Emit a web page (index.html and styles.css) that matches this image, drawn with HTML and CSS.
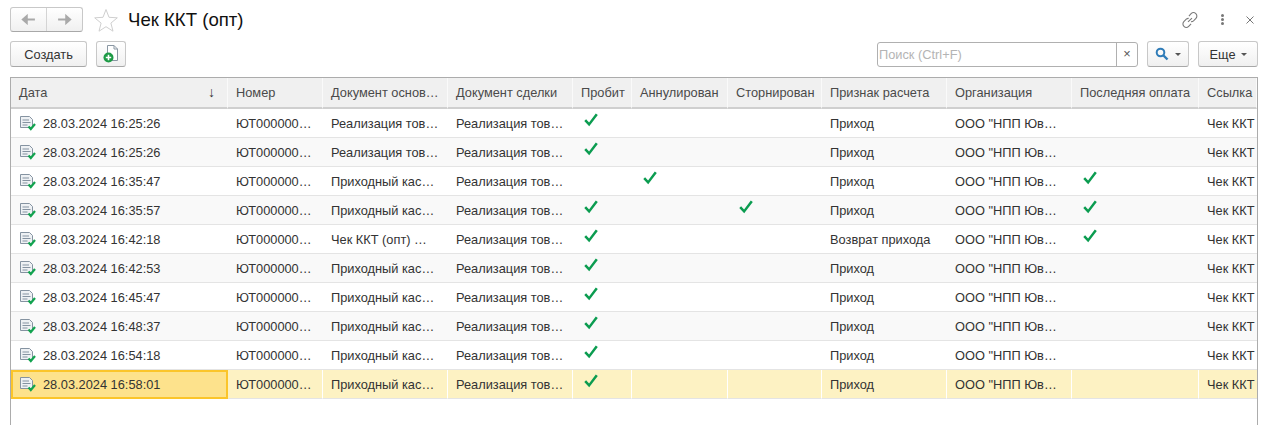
FILE: index.html
```html
<!DOCTYPE html>
<html lang="ru">
<head>
  <meta charset="UTF-8">
  <title>Чек ККТ (опт)</title>
  <link rel="stylesheet" href="styles.css">
</head>
<body>
  <svg class="defs" width="0" height="0">
    <symbol id="doc" viewBox="0 0 16 15">
      <path d="M.5.500h9l3 3v8H.5z" fill="#eef1f4" stroke="#8593a1"/>
      <path d="M2.500 4h6.500M2.500 6.500h8M2.500 9h5" stroke="#8593a1" fill="none"/>
      <path d="M8.500 10.500l2.300 2.500 4.200-5" stroke="#12a34f" stroke-width="2.200" fill="none"/>
    </symbol>
    <symbol id="ok" viewBox="0 0 14 14">
      <path d="M1.200 7.200l3.900 4.200L12.800 1.300" stroke="#0b9c50" stroke-width="2.500" fill="none"/>
    </symbol>
  </svg>

  <div class="topbar">
    <div class="nav-btns">
      <div class="nav-btn">
        <svg viewBox="0 0 16 12"><path d="M15 6H6M6 2.500L2 6l4 3.500z" stroke="#a9a9a9" stroke-width="2.400" fill="#a9a9a9"/></svg>
      </div>
      <div class="nav-btn">
        <svg viewBox="0 0 16 12"><path d="M1 6h9M10 2.500L14 6l-4 3.500z" stroke="#a9a9a9" stroke-width="2.400" fill="#a9a9a9"/></svg>
      </div>
    </div>
    <svg class="star" viewBox="0 0 24 24"><path d="M12 1.500l3 7.800 8.300.5-6.400 5.300 2.100 8.100-7-4.500-7 4.500 2.100-8.100L.7 9.800 9 9.300z" fill="#fff" stroke="#cfcfcf"/></svg>
    <h1>Чек ККТ (опт)</h1>
    <div class="win-icons">
      <svg class="icon-link" viewBox="0 0 16 16"><path d="M6.200 9.800l3.600-3.600M7 4.500l2-2.200a3 3 0 0 1 4.400 4.200l-2.200 2.300a3 3 0 0 1-2.200.7M9 11.500l-2.200 2.200a3 3 0 0 1-4.400-4.200l2.200-2.300a3 3 0 0 1 2.200-.7" stroke="#7a7a7a" fill="none"/></svg>
      <div class="dots"><i></i><i></i><i></i></div>
      <svg class="icon-close" viewBox="0 0 8 8"><path d="M.5.500l7 7M7.500.500l-7 7" stroke="#777" fill="none"/></svg>
    </div>
  </div>

  <div class="cmdbar">
    <div class="btn btn-create">Создать</div>
    <div class="btn btn-copy">
      <svg viewBox="0 0 16 18"><path d="M4.500.500h6.500l3.500 3.500v11.500H4.500z" fill="#fff" stroke="#8a97a3"/><path d="M11 .500V4h3.500" fill="none" stroke="#8a97a3"/><circle cx="5.500" cy="12.500" r="5" fill="#1c9a45"/><path d="M5.500 9.800v5.400M2.800 12.500h5.400" stroke="#fff" stroke-width="1.600"/></svg>
    </div>
    <div class="search">
      <div class="search-input">Поиск (Ctrl+F)</div>
      <div class="search-clear">×</div>
    </div>
    <div class="btn btn-find">
      <svg viewBox="0 0 14 14"><circle cx="5.500" cy="5.500" r="3.800" fill="none" stroke="#2f7cb8" stroke-width="2"/><path d="M8.500 8.500l4 4" stroke="#2f7cb8" stroke-width="2.400"/></svg>
      <span class="caret"></span>
    </div>
    <div class="btn btn-more">Еще<span class="caret"></span></div>
  </div>

  <div class="grid-wrap">
    <table class="grid">
      <colgroup>
        <col class="c-date"><col class="c-num"><col class="c-base"><col class="c-deal"><col class="c-prob"><col class="c-ann"><col class="c-stor"><col class="c-sign"><col class="c-org"><col class="c-last"><col class="c-ref">
      </colgroup>
      <thead>
        <tr>
          <th><div class="th-date">Дата<span class="sort">↓</span></div></th>
          <th>Номер</th><th>Документ основ…</th><th>Документ сделки</th><th>Пробит</th><th>Аннулирован</th><th>Сторнирован</th><th>Признак расчета</th><th>Организация</th><th>Последняя оплата</th><th>Ссылка</th>
        </tr>
      </thead>
      <tbody>
        <tr>
          <td><div class="date"><svg><use href="#doc"/></svg>28.03.2024 16:25:26</div></td>
          <td>ЮТ000000…</td><td>Реализация тов…</td><td>Реализация тов…</td>
          <td class="chk"><svg><use href="#ok"/></svg></td><td></td><td></td>
          <td>Приход</td><td>ООО "НПП Юв…</td><td></td><td class="clip">Чек ККТ</td>
        </tr>
        <tr>
          <td><div class="date"><svg><use href="#doc"/></svg>28.03.2024 16:25:26</div></td>
          <td>ЮТ000000…</td><td>Реализация тов…</td><td>Реализация тов…</td>
          <td class="chk"><svg><use href="#ok"/></svg></td><td></td><td></td>
          <td>Приход</td><td>ООО "НПП Юв…</td><td></td><td class="clip">Чек ККТ</td>
        </tr>
        <tr>
          <td><div class="date"><svg><use href="#doc"/></svg>28.03.2024 16:35:47</div></td>
          <td>ЮТ000000…</td><td>Приходный кас…</td><td>Реализация тов…</td>
          <td></td><td class="chk"><svg><use href="#ok"/></svg></td><td></td>
          <td>Приход</td><td>ООО "НПП Юв…</td><td class="chk"><svg><use href="#ok"/></svg></td><td class="clip">Чек ККТ</td>
        </tr>
        <tr>
          <td><div class="date"><svg><use href="#doc"/></svg>28.03.2024 16:35:57</div></td>
          <td>ЮТ000000…</td><td>Приходный кас…</td><td>Реализация тов…</td>
          <td class="chk"><svg><use href="#ok"/></svg></td><td></td><td class="chk"><svg><use href="#ok"/></svg></td>
          <td>Приход</td><td>ООО "НПП Юв…</td><td class="chk"><svg><use href="#ok"/></svg></td><td class="clip">Чек ККТ</td>
        </tr>
        <tr>
          <td><div class="date"><svg><use href="#doc"/></svg>28.03.2024 16:42:18</div></td>
          <td>ЮТ000000…</td><td>Чек ККТ (опт) …</td><td>Реализация тов…</td>
          <td class="chk"><svg><use href="#ok"/></svg></td><td></td><td></td>
          <td>Возврат прихода</td><td>ООО "НПП Юв…</td><td class="chk"><svg><use href="#ok"/></svg></td><td class="clip">Чек ККТ</td>
        </tr>
        <tr>
          <td><div class="date"><svg><use href="#doc"/></svg>28.03.2024 16:42:53</div></td>
          <td>ЮТ000000…</td><td>Приходный кас…</td><td>Реализация тов…</td>
          <td class="chk"><svg><use href="#ok"/></svg></td><td></td><td></td>
          <td>Приход</td><td>ООО "НПП Юв…</td><td></td><td class="clip">Чек ККТ</td>
        </tr>
        <tr>
          <td><div class="date"><svg><use href="#doc"/></svg>28.03.2024 16:45:47</div></td>
          <td>ЮТ000000…</td><td>Приходный кас…</td><td>Реализация тов…</td>
          <td class="chk"><svg><use href="#ok"/></svg></td><td></td><td></td>
          <td>Приход</td><td>ООО "НПП Юв…</td><td></td><td class="clip">Чек ККТ</td>
        </tr>
        <tr>
          <td><div class="date"><svg><use href="#doc"/></svg>28.03.2024 16:48:37</div></td>
          <td>ЮТ000000…</td><td>Приходный кас…</td><td>Реализация тов…</td>
          <td class="chk"><svg><use href="#ok"/></svg></td><td></td><td></td>
          <td>Приход</td><td>ООО "НПП Юв…</td><td></td><td class="clip">Чек ККТ</td>
        </tr>
        <tr>
          <td><div class="date"><svg><use href="#doc"/></svg>28.03.2024 16:54:18</div></td>
          <td>ЮТ000000…</td><td>Приходный кас…</td><td>Реализация тов…</td>
          <td class="chk"><svg><use href="#ok"/></svg></td><td></td><td></td>
          <td>Приход</td><td>ООО "НПП Юв…</td><td></td><td class="clip">Чек ККТ</td>
        </tr>
        <tr class="selected">
          <td class="current"><div class="date"><svg><use href="#doc"/></svg>28.03.2024 16:58:01</div></td>
          <td>ЮТ000000…</td><td>Приходный кас…</td><td>Реализация тов…</td>
          <td class="chk"><svg><use href="#ok"/></svg></td><td></td><td></td>
          <td>Приход</td><td>ООО "НПП Юв…</td><td></td><td class="clip">Чек ККТ</td>
        </tr>
      </tbody>
    </table>
  </div>
</body>
</html>
```

FILE: styles.css
```css
html, body {
  height: 100%;
}
body {
  margin: 0;
  padding: 7px 16px 0 10px;
  box-sizing: border-box;
  display: flex;
  flex-direction: column;
  overflow: hidden;
  background: #fff;
  color: #333;
  font-family: "Liberation Sans", Arial, sans-serif;
  font-size: 12.8px;
}
.defs {
  position: absolute;
}

.topbar {
  display: flex;
  align-items: center;
  height: 25px;
}
.nav-btns {
  display: flex;
  width: 73px;
  height: 25px;
  box-sizing: border-box;
  border: 1px solid #c8c8c8;
  border-bottom-color: #a8a8a8;
  border-radius: 3px;
  background: linear-gradient(#fff, #f0f0f0);
}
.nav-btn {
  flex: 1;
  display: flex;
  align-items: center;
  justify-content: center;
}
.nav-btn + .nav-btn {
  border-left: 1px solid #d4d4d4;
}
.nav-btn svg {
  width: 15px;
  height: 11px;
}
.star {
  width: 24px;
  height: 24px;
  margin-left: 11px;
}
h1 {
  margin: 0 0 0 10px;
  font-size: 18.6px;
  font-weight: normal;
  color: #111;
}
.win-icons {
  margin-left: auto;
  display: flex;
  align-items: center;
  gap: 22px;
  padding-right: 4px;
}
.icon-link {
  width: 16px;
  height: 16px;
  margin-right: 1px;
  transform: scale(1.1);
}
.dots {
  display: flex;
  flex-direction: column;
  gap: 1px;
}
.dots i {
  width: 3px;
  height: 3px;
  border-radius: 50%;
  background: #777;
}
.icon-close {
  width: 8px;
  height: 8px;
}

.cmdbar {
  display: flex;
  align-items: center;
  margin-top: 9px;
  height: 26px;
  flex-shrink: 0;
}
.btn {
  height: 26px;
  box-sizing: border-box;
  display: flex;
  align-items: center;
  justify-content: center;
  border: 1px solid #c8c8c8;
  border-bottom-color: #a8a8a8;
  border-radius: 3px;
  background: linear-gradient(#fff, #f0f0f0);
}
.btn-create {
  width: 77px;
}
.btn-copy {
  width: 30px;
  margin-left: 9px;
}
.btn-copy svg {
  width: 16px;
  height: 18px;
}
.search {
  display: flex;
  width: 261px;
  height: 25px;
  margin-left: auto;
  box-sizing: border-box;
  border: 1px solid #b0b0b0;
  border-radius: 3px;
}
.search-input {
  flex: 1;
  padding: 4px 1px;
  color: #b4b4b4;
  line-height: 15px;
}
.search-clear {
  width: 20px;
  border-left: 1px solid #b0b0b0;
  text-align: center;
  line-height: 22px;
  color: #555;
}
.btn-find {
  width: 42px;
  margin-left: 9px;
  gap: 6px;
}
.btn-find svg {
  width: 14px;
  height: 14px;
}
.btn-more {
  width: 60px;
  margin-left: 9px;
  gap: 5px;
}
.caret {
  width: 0;
  height: 0;
  border-left: 3px solid transparent;
  border-right: 3px solid transparent;
  border-top: 3px solid #555;
}

.grid-wrap {
  flex: 1;
  margin-top: 10px;
  border: 1px solid #acacac;
  border-bottom: none;
  overflow: hidden;
}
.grid {
  table-layout: fixed;
  border-collapse: separate;
  border-spacing: 0;
  width: 1246px;
}
.c-date { width: 217px; }
.c-num { width: 95px; }
.c-base { width: 125px; }
.c-deal { width: 125px; }
.c-prob { width: 59px; }
.c-ann { width: 96px; }
.c-stor { width: 94px; }
.c-sign { width: 125px; }
.c-org { width: 125px; }
.c-last { width: 127px; }
.c-ref { width: 58px; }

.grid th {
  height: 31px;
  padding: 0 8px 1px;
  box-sizing: border-box;
  background: #f0f0f0;
  border-right: 1px solid #fafafa;
  border-bottom: 2px solid #cfcfcf;
  font-weight: normal;
  text-align: left;
  color: #4a4a4a;
  white-space: nowrap;
  overflow: hidden;
}
.th-date {
  display: flex;
  justify-content: space-between;
  align-items: center;
  padding-right: 4px;
}
.sort {
  color: #333;
  font-size: 14px;
}
.grid td {
  height: 29px;
  padding: 0 6px 0 8px;
  box-sizing: border-box;
  border-bottom: 1px solid #e4e4e4;
  white-space: nowrap;
  overflow: hidden;
  color: #333;
}
.grid tbody tr:nth-child(even) td {
  background: #f9f9f9;
}
.grid td.chk {
  vertical-align: top;
  padding: 4px 0 0 11px;
  line-height: 0;
}
.chk svg {
  width: 14px;
  height: 14px;
}
.date {
  display: flex;
  align-items: center;
  gap: 7px;
  padding-left: 1px;
}
.date svg {
  width: 16px;
  height: 15px;
  flex-shrink: 0;
}
.grid td.clip {
  padding-right: 0;
}
.grid tbody tr.selected td {
  background: #fdf2c3;
  border-right: 1px solid #fff;
}
.grid tbody tr.selected td.clip {
  border-right: none;
}
.grid tbody tr.selected td.current {
  background: #fde28c;
  outline: 2px solid #fbc52a;
  outline-offset: -2px;
}
```
